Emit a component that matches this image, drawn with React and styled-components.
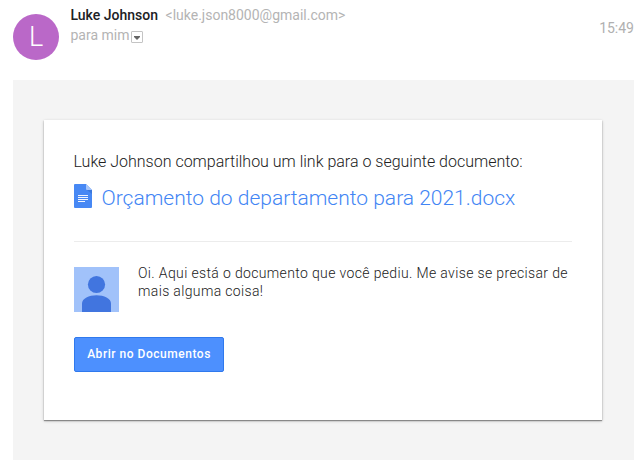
import React from "react";
import styled, { createGlobalStyle } from "styled-components";

const GlobalStyle = createGlobalStyle`
  * { box-sizing: border-box; }
  body {
    margin: 0;
    background: #fff;
    font-family: Roboto, "Liberation Sans", sans-serif;
  }
`;

const Message = styled.main`
  width: 643px;
  height: 470px;
  padding: 0 9px 10px 13px;
  display: flex;
  flex-direction: column;
  overflow: hidden;
`;

const Header = styled.header`
  height: 80px;
  flex: none;
  display: flex;
  align-items: flex-start;
`;

const Avatar = styled.div`
  width: 46px;
  height: 46px;
  margin-top: 14px;
  flex: none;
  border-radius: 50%;
  background: #ba68c8;
  color: #fff;
  font-size: 27px;
  font-weight: 300;
  line-height: 46px;
  text-align: center;
`;

const Sender = styled.div`
  flex: 1;
  margin: 5px 0 0 11.5px;
  font-size: 14px;
  line-height: 20px;
  color: #b4b4b4;
  white-space: nowrap;
`;

const Name = styled.span`
  color: #202124;
  font-weight: 500;
  margin-right: 7.5px;
`;

const Recipient = styled.div`
  display: flex;
  align-items: center;
`;

const DetailsToggle = styled.button`
  width: 12px;
  height: 12px;
  margin: 4px 0 0 1.5px;
  padding: 1px 0 0;
  display: grid;
  place-items: center;
  border: 1px solid #c4c4c4;
  border-radius: 1px;
  background: #fff;
`;

const Time = styled.time`
  margin-top: 18px;
  font-size: 14px;
  line-height: 20px;
  color: #b0b0b0;
`;

const Body = styled.section`
  flex: 1;
  padding: 40px 32px 40px 31px;
  background: #f4f4f4;
`;

const Card = styled.article`
  height: 300px;
  padding: 30px;
  background: #fff;
  box-shadow: 0 1px 1px rgba(0, 0, 0, 0.35), 0 1px 3px rgba(0, 0, 0, 0.22);
`;

const Intro = styled.p`
  margin: 0 0 0 -0.5px;
  font-size: 16px;
  font-weight: 300;
  line-height: 24px;
  color: #212121;
  white-space: nowrap;
`;

const DocumentLink = styled.a`
  height: 46px;
  margin-top: 8px;
  display: flex;
  align-items: flex-start;
  gap: 9.5px;
  color: #4285f4;
  font-size: 21px;
  font-weight: 300;
  line-height: 32px;
  text-decoration: none;
  white-space: nowrap;

  svg { flex: none; margin-top: 2px; }
`;

const Rule = styled.hr`
  margin: 13px 0 25px;
  border: 0;
  border-top: 1px solid #ececec;
`;

const Comment = styled.div`
  display: flex;
  align-items: flex-start;
  gap: 19px;

  svg { flex: none; }
`;

const CommentText = styled.p`
  margin: -3px 0 0;
  font-size: 14px;
  font-weight: 300;
  line-height: 18px;
  letter-spacing: 0.355px;
  color: #212121;
  white-space: nowrap;
`;

const OpenButton = styled.button`
  width: 150px;
  height: 35px;
  margin-top: 25px;
  padding: 0;
  border: 1px solid #3079ed;
  border-radius: 2px;
  background: #4d90fe;
  color: #fff;
  font: 500 12px/33px Roboto, "Liberation Sans", sans-serif;
  letter-spacing: 0.53px;
  display: block;
`;

const CaretIcon = () => (
  <svg width="6" height="4" viewBox="0 0 6 4" aria-hidden="true">
    <path d="M0 0h6v1L3 4 0 1z" fill="#666" />
  </svg>
);

const DocumentIcon = () => (
  <svg width="18" height="24" viewBox="0 0 18 24" aria-hidden="true">
    <path d="M1 0H12l6 6v17a1 1 0 0 1-1 1H1a1 1 0 0 1-1-1V1a1 1 0 0 1 1-1z" fill="#4788f4" />
    <path d="M13 6h5v4z" fill="#3c78dc" />
    <path d="M12 0l6 6h-5a1 1 0 0 1-1-1z" fill="#a6c5fa" />
    <path d="M4 11h10v1H4zm0 2h10v1H4zm0 2h10v1H4zm0 2h7v1H4z" fill="#f1f5fe" />
  </svg>
);

const PersonIcon = () => (
  <svg width="45" height="45" viewBox="0 0 45 45" aria-hidden="true">
    <path d="M0 0h45v45H0z" fill="#a1c2fa" />
    <circle cx="22.5" cy="17.5" r="8.6" fill="#4175df" />
    <path d="M8 45v-8.5C8 31.5 15 28.3 22.5 28.3S37 31.5 37 36.5V45z" fill="#4175df" />
  </svg>
);

export default function App() {
  return (
    <>
      <GlobalStyle />
      <Message>
        <Header>
          <Avatar>L</Avatar>
          <Sender>
            <Name>Luke Johnson</Name>
            <span>&lt;luke.json8000@gmail.com&gt;</span>
            <Recipient>
              para mim
              <DetailsToggle aria-label="Mostrar detalhes"><CaretIcon /></DetailsToggle>
            </Recipient>
          </Sender>
          <Time>15:49</Time>
        </Header>
        <Body>
          <Card>
            <Intro>Luke Johnson compartilhou um link para o seguinte documento:</Intro>
            <DocumentLink>
              <DocumentIcon />
              <span>Orçamento do departamento para 2021.docx</span>
            </DocumentLink>
            <Rule />
            <Comment>
              <PersonIcon />
              <CommentText>
                Oi. Aqui está o documento que você pediu. Me avise se precisar de
                <br />
                mais alguma coisa!
              </CommentText>
            </Comment>
            <OpenButton>Abrir no Documentos</OpenButton>
          </Card>
        </Body>
      </Message>
    </>
  );
}
